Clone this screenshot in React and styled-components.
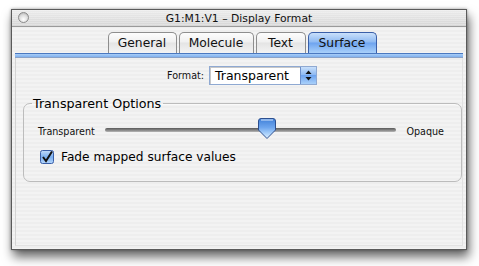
import React from "react";
import styled, { createGlobalStyle } from "styled-components";

const Global = createGlobalStyle`
  html, body {
    margin: 0;
    padding: 0;
    background: #ffffff;
  }
  body {
    font-family: "DejaVu Sans", "Liberation Sans", sans-serif;
    color: #000;
  }
`;

const Page = styled.div`
  width: 479px;
  height: 266px;
  padding: 9px 0 0 11px;
  box-sizing: border-box;
`;

const Window = styled.div`
  width: 456px;
  height: 241px;
  box-sizing: border-box;
  border: 1px solid #5a5a5a;
  display: flex;
  flex-direction: column;
  background: repeating-linear-gradient(
    to bottom,
    #eeeeee 0px,
    #eeeeee 2px,
    #f3f3f3 2px,
    #f3f3f3 4px
  );
  box-shadow: 2px 7px 10px rgba(0, 0, 0, 0.6), 0 0 3px rgba(0, 0, 0, 0.35);
`;

const TitleBar = styled.div`
  height: 16px;
  position: relative;
  display: flex;
  align-items: center;
  justify-content: center;
  border-bottom: 1px solid #9a9a9a;
  background: repeating-linear-gradient(
      to bottom,
      rgba(255, 255, 255, 0.25) 0px,
      rgba(255, 255, 255, 0.25) 1px,
      rgba(0, 0, 0, 0) 1px,
      rgba(0, 0, 0, 0) 2px
    ),
    linear-gradient(to bottom, #ececec, #d6d6d6);
  font-size: 10.8px;
  color: #111;
`;

const CloseDot = styled.span`
  position: absolute;
  left: 6px;
  top: 2px;
  width: 11px;
  height: 11px;
  border-radius: 50%;
  box-sizing: border-box;
  border: 1px solid #8a8a8a;
  background: radial-gradient(circle at 50% 70%, #ffffff 0%, #dcdcdc 55%, #a8a8a8 100%);
`;

const TabRow = styled.div`
  display: flex;
  justify-content: center;
  gap: 2px;
  margin-top: 5px;
  padding-left: 6px;
  height: 21px;
`;

const Tab = styled.div`
  width: ${(p) => p.$w}px;
  height: 21px;
  box-sizing: border-box;
  display: flex;
  align-items: center;
  justify-content: center;
  font-size: 12.3px;
  border: 1px solid ${(p) => (p.$active ? "#3a5fa8" : "#8e8e8e")};
  border-bottom: none;
  border-radius: 5px 5px 0 0;
  color: #111;
  background: ${(p) =>
    p.$active
      ? "linear-gradient(to bottom, #c9e0fb 0%, #8fbaf2 45%, #6ea4ef 50%, #a9d0fa 100%)"
      : "linear-gradient(to bottom, #fdfdfd 0%, #f0f0f0 45%, #e4e4e4 50%, #f3f3f3 100%)"};
`;

const BlueRule = styled.div`
  margin: 0 3px;
  height: 5px;
  box-sizing: border-box;
  border-top: 1px solid #4a78c0;
  border-bottom: 1px solid #8aa2c8;
  background: linear-gradient(to bottom, #a9cdf7, #7fb0ee);
`;

const Pane = styled.div`
  flex: 1;
  margin: 0 3px 3px;
  border-left: 1px solid #d4d4d4;
  border-right: 1px solid #e2e2e2;
  border-bottom: 1px solid #e2e2e2;
  display: flex;
  flex-direction: column;
  padding: 8px 4px 0 7px;
`;

const FormatRow = styled.div`
  display: flex;
  align-items: center;
  justify-content: center;
  gap: 5px;
  padding-left: 3px;
`;

const SmallLabel = styled.span`
  font-size: 9.6px;
  color: #111;
`;

const Popup = styled.div`
  width: 108px;
  height: 19px;
  box-sizing: border-box;
  display: flex;
  border: 1px solid #8fa9d2;
  background: #fff;
  box-shadow: inset 1px 1px 0 #c8c8c8;
`;

const PopupText = styled.span`
  flex: 1;
  font-size: 12.5px;
  padding-left: 5px;
  line-height: 17px;
`;

const PopupArrows = styled.span`
  width: 15px;
  display: flex;
  align-items: center;
  justify-content: center;
  background: linear-gradient(to bottom, #c9e0fb 0%, #8fbaf2 45%, #6ea4ef 50%, #a9d0fa 100%);
  border-left: 1px solid #6d8fc9;
`;

const Group = styled.fieldset`
  margin: 11px 0 0 0;
  width: 439px;
  height: 86px;
  box-sizing: border-box;
  border: 1px solid #bcbcbc;
  border-radius: 7px;
  padding: 0 17px 0 14px;
  display: flex;
  flex-direction: column;
  box-shadow: inset 0 1px 0 #fafafa;
`;

const Legend = styled.legend`
  font-size: 12.7px;
  padding: 0 2px 0 1px;
  margin-left: -6px;
`;

const SliderRow = styled.div`
  display: flex;
  align-items: center;
  gap: 10px;
  margin-top: 9px;
  height: 22px;
`;

const Track = styled.div`
  flex: 1;
  height: 22px;
  position: relative;
  display: flex;
  align-items: center;
`;

const TrackLine = styled.div`
  width: 100%;
  height: 4px;
  margin-top: -2px;
  border-radius: 2px;
  background: linear-gradient(to bottom, #5a5a5a, #8c8c8c 60%, #b8b8b8);
`;

const Thumb = styled.svg`
  position: absolute;
  top: -2px;
  transform: translateX(-50%);
`;

const CheckRow = styled.label`
  display: flex;
  align-items: center;
  gap: 7px;
  margin-top: 8px;
  margin-left: 2px;
  font-size: 12.2px;
`;

const tabs = [
  { label: "General", w: 69 },
  { label: "Molecule", w: 75 },
  { label: "Text", w: 50 },
  { label: "Surface", w: 69, active: true },
];

export default function App() {
  const value = 0.555;
  return (
    <Page>
      <Global />
      <Window>
        <TitleBar>
          <CloseDot />
          G1:M1:V1 – Display Format
        </TitleBar>
        <TabRow>
          {tabs.map((t) => (
            <Tab key={t.label} $active={t.active} $w={t.w}>
              {t.label}
            </Tab>
          ))}
        </TabRow>
        <BlueRule />
        <Pane>
          <FormatRow>
            <SmallLabel>Format:</SmallLabel>
            <Popup>
              <PopupText>Transparent</PopupText>
              <PopupArrows>
                <svg width="7" height="11" viewBox="0 0 7 11">
                  <path d="M3.5 0.5 L6.5 4 L0.5 4 Z" fill="#111" />
                  <path d="M3.5 10.5 L6.5 7 L0.5 7 Z" fill="#111" />
                </svg>
              </PopupArrows>
            </Popup>
          </FormatRow>
          <Group>
            <Legend>Transparent Options</Legend>
            <SliderRow>
              <SmallLabel>Transparent</SmallLabel>
              <Track>
                <TrackLine />
                <Thumb
                  width="18"
                  height="21"
                  viewBox="0 0 18 21"
                  style={{ left: `${value * 100}%` }}
                >
                  <defs>
                    <linearGradient id="tg" x1="0" y1="0" x2="0" y2="1">
                      <stop offset="0" stopColor="#3f7fd8" />
                      <stop offset="0.45" stopColor="#6ea6ee" />
                      <stop offset="0.75" stopColor="#a9d0fa" />
                      <stop offset="1" stopColor="#dff0ff" />
                    </linearGradient>
                  </defs>
                  <path
                    d="M3 0.5 H15 Q17.5 0.5 17.5 3 V12 L9 20.5 L0.5 12 V3 Q0.5 0.5 3 0.5 Z"
                    fill="url(#tg)"
                    stroke="#2c4f8f"
                  />
                  <path d="M3 2 H15" stroke="#d8e8fc" strokeWidth="1" />
                </Thumb>
              </Track>
              <SmallLabel>Opaque</SmallLabel>
            </SliderRow>
            <CheckRow>
              <svg width="14" height="14" viewBox="0 0 14 14">
                <defs>
                  <linearGradient id="cg" x1="0" y1="0" x2="0" y2="1">
                    <stop offset="0" stopColor="#c3dcfa" />
                    <stop offset="0.5" stopColor="#7aaff0" />
                    <stop offset="1" stopColor="#b5d6fb" />
                  </linearGradient>
                </defs>
                <rect x="0.5" y="0.5" width="13" height="13" rx="2" fill="url(#cg)" stroke="#3a5fa8" />
                <path d="M3 7 L6 11 L12 1.5" fill="none" stroke="#111" strokeWidth="2" />
              </svg>
              Fade mapped surface values
            </CheckRow>
          </Group>
        </Pane>
      </Window>
    </Page>
  );
}
